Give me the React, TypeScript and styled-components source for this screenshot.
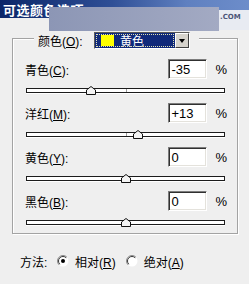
import styled, { createGlobalStyle } from 'styled-components'

const GlobalStyle = createGlobalStyle`
  body {
    margin: 0;
    background: #efefef;
    font-family: "Liberation Sans", "Noto Sans CJK SC", sans-serif;
    font-size: 12px;
    color: #000;
  }
`

const Window = styled.div`
  position: relative;
  width: 249px;
  height: 284px;
  overflow: hidden;
  background: #efefef;
`

const TitleBar = styled.div`
  height: 18px;
  display: flex;
  align-items: center;
  padding-left: 3px;
  background: linear-gradient(90deg, #0b2669 0%, #2f4f96 45%, #5f80c0 75%, #6d8dca 100%);
  color: #fff;
  font-family: "Noto Sans CJK SC", sans-serif;
  font-weight: bold;
  font-size: 13px;
  letter-spacing: 0.5px;
`

// pasted watermark over the title bar
const Watermark = styled.div`
  position: absolute;
  left: 49px;
  top: 7px;
  width: 170px;
  height: 24px;
  background: linear-gradient(90deg, #8c96b5, #a3aac3);
`

const SiteTag = styled.div`
  position: absolute;
  left: 219px;
  top: 10px;
  width: 30px;
  height: 20px;
  box-sizing: border-box;
  padding: 3px 0 0 1px;
  background: #e8ebf2;
  color: #4c5578;
  font-family: "DejaVu Sans", sans-serif;
  font-weight: bold;
  font-size: 7px;
`

const Group = styled.fieldset`
  margin: 10px 11px 0 12px;
  padding: 0 10px 0 12px;
  min-width: 0;
  border: 1px solid #a3a3a3;
  box-shadow: 1px 1px 0 #fff, inset 1px 1px 0 #fff;
`

const Legend = styled.legend`
  margin-left: 9px;
  padding: 4px 9px 0 4px;
  background: #efefef;
`

const LegendInner = styled.div`
  display: flex;
  align-items: center;
  height: 17px;
`

const LegendLabel = styled.span`
  width: 56px;
`

const Combo = styled.div`
  display: flex;
  width: 96px;
  height: 17px;
  box-sizing: border-box;
  border: 1px solid;
  border-color: #5a5a5a #fff #fff #5a5a5a;
  background: #fff;
`

const ComboField = styled.div`
  flex: 1;
  display: flex;
  align-items: center;
  gap: 6px;
  padding-left: 6px;
  background: #10297a;
  outline: 1px dotted #e0e0b0;
  outline-offset: -2px;
  color: #fff;
`

const Swatch = styled.span<{ $color: string }>`
  width: 13px;
  height: 11px;
  background: ${(p) => p.$color};
`

const ComboButton = styled.div`
  width: 14px;
  box-sizing: border-box;
  display: flex;
  align-items: center;
  justify-content: center;
  background: #d6d3cc;
  border: 1px solid;
  border-color: #fff #404040 #404040 #fff;

  &::after {
    content: "";
    border-left: 3px solid transparent;
    border-right: 3px solid transparent;
    border-top: 4px solid #000;
  }
`

const Channels = styled.div`
  display: flex;
  flex-direction: column;
  gap: 2px;
  padding-top: 10px;
`

const Row = styled.div`
  display: flex;
  align-items: center;
  height: 20px;
`

const Label = styled.span`
  flex: 1;
`

const Key = styled.u`
  text-underline-offset: 1px;
`

const ValueBox = styled.div`
  width: 39px;
  height: 20px;
  box-sizing: border-box;
  padding-left: 2px;
  display: flex;
  align-items: center;
  background: #fff;
  border: 1px solid;
  border-color: #7c7c7c #fff #fff #7c7c7c;
  box-shadow: inset 1px 1px 0 #303030, inset -1px -1px 0 #e4e2dc;
  font-size: 13px;
`

const Percent = styled.span`
  margin-left: 8px;
  font-size: 13px;
`

const Slider = styled.div`
  position: relative;
  height: 22px;
  box-sizing: border-box;
  padding-top: 9px;
  margin: 0 2px 0 1px;
`

const Track = styled.div`
  position: relative;
  height: 3px;
  border: 1px solid #1c1c1c;
  background: #fff;
  box-shadow: 0 1px 0 #fff;
`

const Tick = styled.div`
  position: absolute;
  left: 50%;
  top: 0;
  width: 1px;
  height: 3px;
  background: #9a9a9a;
`

const Thumb = styled.svg`
  position: absolute;
  top: 7px;
  margin-left: -5px;
`

const Method = styled.div`
  display: flex;
  align-items: center;
  height: 16px;
  margin-top: 19px;
  padding-left: 20px;
`

const MethodLabel = styled.span`
  width: 37px;
`

const Option = styled.label`
  display: flex;
  align-items: center;
  gap: 6px;
  margin-right: 10px;
`

type Channel = { name: string; key: string; value: number }

const channels: Channel[] = [
  { name: '青色', key: 'C', value: -35 },
  { name: '洋红', key: 'M', value: 13 },
  { name: '黄色', key: 'Y', value: 0 },
  { name: '黑色', key: 'B', value: 0 },
]

function fmt(v: number) {
  if (v > 0) return '+' + v
  return String(v)
}

function Radio({ checked }: { checked?: boolean }) {
  return (
    <svg width="12" height="12" viewBox="0 0 12 12">
      <circle cx="6" cy="6" r="5.5" fill="#fff" />
      <path d="M2.1 9.9 A5.5 5.5 0 0 1 9.9 2.1" fill="none" stroke="#8a8a8a" strokeWidth="1" />
      <path d="M2.8 9.2 A4.5 4.5 0 0 1 9.2 2.8" fill="none" stroke="#3a3a3a" strokeWidth="1" />
      {checked && <circle cx="6" cy="6" r="2" fill="#000" />}
    </svg>
  )
}

function ChannelRow({ ch }: { ch: Channel }) {
  const pos = 50 + ch.value / 2
  return (
    <div>
      <Row>
        <Label>
          {ch.name}(<Key>{ch.key}</Key>):
        </Label>
        <ValueBox>{fmt(ch.value)}</ValueBox>
        <Percent>%</Percent>
      </Row>
      <Slider>
        <Track>
          <Tick />
        </Track>
        <Thumb width="10" height="9" viewBox="0 0 10 9" style={{ left: pos + '%' }}>
          <polygon points="0.5,4 5,0.5 9.5,4 9.5,8.5 0.5,8.5" fill="#f4f4f4" stroke="#111" strokeWidth="1" />
        </Thumb>
      </Slider>
    </div>
  )
}

export default function App() {
  return (
    <Window>
      <GlobalStyle />
      <TitleBar>可选颜色选项</TitleBar>
      <Watermark />
      <SiteTag>.COM</SiteTag>

      <Group>
        <Legend>
          <LegendInner>
            <LegendLabel>
              颜色(<Key>O</Key>):
            </LegendLabel>
            <Combo>
              <ComboField>
                <Swatch $color="#ffff00" />
                黄色
              </ComboField>
              <ComboButton />
            </Combo>
          </LegendInner>
        </Legend>

        <Channels>
          {channels.map((ch) => (
            <ChannelRow key={ch.key} ch={ch} />
          ))}
        </Channels>
      </Group>

      <Method>
        <MethodLabel>方法:</MethodLabel>
        <Option>
          <Radio checked />
          <span>
            相对(<Key>R</Key>)
          </span>
        </Option>
        <Option>
          <Radio />
          <span>
            绝对(<Key>A</Key>)
          </span>
        </Option>
      </Method>
    </Window>
  )
}
